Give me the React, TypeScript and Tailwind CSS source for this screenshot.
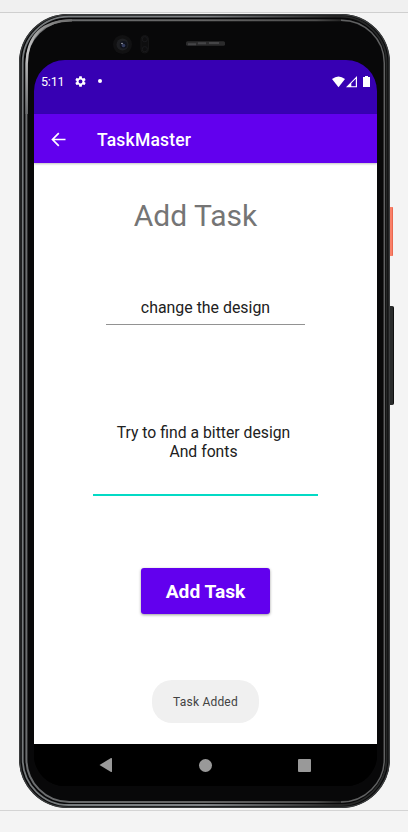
import React from "react";

function Bezel() {
  return (
    <svg className="absolute inset-0" width="371" height="795" viewBox="0 0 371 795" fill="none">
      <defs>
        <linearGradient id="inner" x1="0" y1="0" x2="371" y2="0" gradientUnits="userSpaceOnUse">
          <stop offset="0" stopColor="#6c6e70" />
          <stop offset="0.5" stopColor="#646464" />
          <stop offset="0.8" stopColor="#4c4c4c" />
          <stop offset="0.9" stopColor="#111" />
          <stop offset="1" stopColor="#111" />
        </linearGradient>
        <linearGradient id="shine" x1="8" y1="100" x2="62" y2="6" gradientUnits="userSpaceOnUse">
          <stop offset="0" stopColor="#6c6e70" />
          <stop offset="0.5" stopColor="#c8c8c8" />
          <stop offset="1" stopColor="#646464" />
        </linearGradient>
        <linearGradient id="mid" x1="0" y1="0" x2="371" y2="0" gradientUnits="userSpaceOnUse">
          <stop offset="0" stopColor="#75797b" />
          <stop offset="0.5" stopColor="#808386" />
          <stop offset="0.85" stopColor="#262626" />
          <stop offset="1" stopColor="#262828" />
        </linearGradient>
      </defs>
      <rect x="0" y="0" width="371" height="794" rx="49" fill="#080809" />
      <rect x="0.75" y="0.75" width="369.5" height="792.5" rx="48" stroke="#393b3c" strokeWidth="1.5" />
      <rect x="3.7" y="2.7" width="363.8" height="788.3" rx="46" stroke="url(#mid)" strokeWidth="1.8" />
      <rect x="7.4" y="6.2" width="358" height="781.8" rx="43" stroke="url(#inner)" strokeWidth="2" />
      <path d="M7.7 100V50Q8.5 7 53 6.4" stroke="url(#shine)" strokeWidth="2.4" />
      <path d="M322 6.2A43 43 0 0 1 365.3 49V745A43 43 0 0 1 322 788" stroke="#606162" strokeWidth="1.4" />
      <circle cx="103.5" cy="30.5" r="9.5" fill="#111112" />
      <circle cx="103.5" cy="30.5" r="6" fill="#1e1f22" />
      <circle cx="104.5" cy="30.8" r="3.8" fill="#10131d" />
      <circle cx="104.5" cy="31.5" r="1.8" fill="#343c5c" />
      <circle cx="103" cy="29.5" r="0.8" fill="#aeb1bd" />
      <rect x="122" y="21.5" width="7.5" height="17.5" rx="3.7" fill="#0e0e0f" stroke="#151516" />
      <circle cx="125.8" cy="25.2" r="2.6" stroke="#19191c" />
      <circle cx="125.8" cy="35.2" r="2.6" stroke="#19191c" />
      <rect x="167" y="27.3" width="39" height="4.5" rx="1.5" fill="#2b2b2c" />
      <path d="M169 30.3h8M179 29.3h8M190 29h10" stroke="#454547" strokeWidth="2" />
    </svg>
  );
}

function StatusBar() {
  return (
    <div className="flex h-[54px] items-start bg-[#3700b3] pt-[14px] pr-[6px] pl-[7px] text-white">
      <span className="w-[33px] text-[12.5px] leading-4 tracking-[-0.2px]">5:11</span>
      <svg className="mt-[1px]" width="13" height="13" viewBox="0 0 24 24" fill="currentColor">
        <path d="M19.14 12.94c.04-.3.06-.61.06-.94s-.02-.64-.07-.94l2.03-1.58a.49.49 0 0 0 .12-.61l-1.92-3.32a.49.49 0 0 0-.59-.22l-2.39.96a7 7 0 0 0-1.62-.94l-.36-2.54a.48.48 0 0 0-.48-.41h-3.84a.47.47 0 0 0-.47.41l-.36 2.54c-.59.24-1.13.57-1.62.94l-2.39-.96a.48.48 0 0 0-.59.22L2.74 8.87a.47.47 0 0 0 .12.61l2.03 1.58a7 7 0 0 0 0 1.88l-2.03 1.58a.49.49 0 0 0-.12.61l1.92 3.32c.12.22.37.29.59.22l2.39-.96c.5.38 1.03.7 1.62.94l.36 2.54c.05.24.24.41.48.41h3.84c.24 0 .44-.17.47-.41l.36-2.54a7 7 0 0 0 1.62-.94l2.39.96c.22.08.47 0 .59-.22l1.92-3.32a.47.47 0 0 0-.12-.61zM12 15.6a3.6 3.6 0 1 1 0-7.2 3.6 3.6 0 0 1 0 7.2" />
      </svg>
      <span className="mt-[5px] ml-[11px] size-1 rounded-full bg-white" />
      <svg className="mt-[2px] ml-auto" width="39" height="12" viewBox="0 0 39 12" fill="#fff">
        <path d="M0 3Q6.5 -2 13 3L6.5 11.3Z" />
        <path fillRule="evenodd" d="M14 11.3L25 0V11.3ZM19.3 7.2V10.2H23.8V2.8Z" />
        <path d="M33 0h3v1h2v10h-7V1h2z" />
      </svg>
    </div>
  );
}

function AppBar() {
  return (
    <header className="relative flex h-[49px] items-center bg-[#6200ee] pt-[2px] pl-[17px] text-white shadow-[0_1px_2px_rgba(0,0,0,0.25)]">
      <svg width="16" height="16" viewBox="0 0 16 16" fill="none" stroke="currentColor" strokeWidth="1.7">
        <path d="M7.8 1.2L1.5 7.5L7.8 13.8M1.5 7.5H14.5" />
      </svg>
      <h1 className="mt-[2px] ml-[30px] text-[17.5px] font-medium tracking-[0.2px]">TaskMaster</h1>
    </header>
  );
}

function NavBar() {
  return (
    <nav className="flex h-[42px] items-center bg-black pl-[65px]">
      <svg width="13" height="16" viewBox="0 0 13 16" fill="#999">
        <path d="M.5 8L12 1Q13 .7 13 1.8V14.2Q13 15.3 12 15Z" />
      </svg>
      <span className="ml-[87px] size-[13px] rounded-full bg-[#999]" />
      <span className="ml-[86px] size-[13px] rounded-[1px] bg-[#999]" />
    </nav>
  );
}

export default function App() {
  return (
    <div className="h-[832px] w-[408px] overflow-hidden bg-[#f4f4f4] font-[Roboto,sans-serif]">
      <div className="h-[13px] border-b border-[#cfcfcf] bg-[#f0f0f0]" />
      <div className="h-[798px] border-b border-[#d4d4d4] pt-px pl-[19px]">
        <div className="relative h-[795px] w-[371px] pt-[46px] pl-[15px]">
          <span className="absolute top-[193px] left-[370px] h-[49px] w-[4px] rounded-r-[1px] border-r border-[#e96850] bg-[#fa8068]" />
          <span className="absolute top-[292px] left-[370px] h-[99px] w-[5px] rounded-r-[2px] border-r border-[#101010] bg-[#292b2b]" />
          <Bezel />
          <div className="relative flex h-[726px] w-[343px] flex-col overflow-hidden rounded-[31px] bg-black">
            <StatusBar />
            <AppBar />
            <main className="flex flex-1 flex-col items-center bg-white text-[#212121]">
              <h2 className="mt-[35px] mr-[20px] text-[30px] leading-9 text-[#757575]">Add Task</h2>
              <div className="mt-[61px] flex h-[30px] w-[199px] justify-center border-b border-[#929292] pt-[2px]">
                <span className="text-[15.9px] leading-[22px]">change the design</span>
              </div>
              <div className="mt-[99px] h-[72px] w-[225px] border-b-2 border-[#03dac5] pr-[4px] text-center text-[15.75px] leading-[18.5px]">
                Try to find a bitter design
                <br />
                And fonts
              </div>
              <button className="mt-[72px] h-[46px] w-[129px] rounded-[3px] bg-[#6200ee] pt-[2px] text-[19.2px] font-bold text-white shadow-[0_1px_3px_rgba(0,0,0,0.4)]">
                Add Task
              </button>
              <div className="mt-[66px] flex h-[43px] w-[107px] items-center justify-center rounded-[20px] bg-[#f0f0f0] pt-px text-[12px] tracking-[0.2px] text-[#424242]">
                Task Added
              </div>
            </main>
            <NavBar />
          </div>
        </div>
      </div>
    </div>
  );
}
